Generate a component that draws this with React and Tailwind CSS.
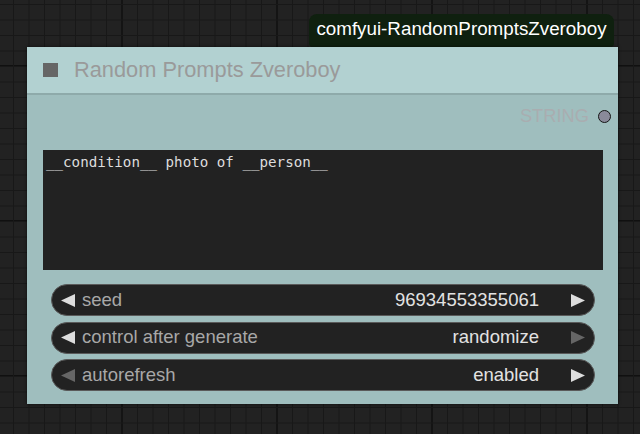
import React from 'react';

const sans = "font-['Liberation_Sans',Arial,sans-serif]";

const Arrow = ({ dir, on }) => (
  <svg width="15" height="13" viewBox="0 0 15 13" className="shrink-0">
    <polygon
      points={dir === 'left' ? '0,6.5 14,0 14,13' : '1,0 15,6.5 1,13'}
      fill={on ? '#dddddd' : '#666666'}
    />
  </svg>
);

const Widget = ({ label, value, left = true, right = true }) => (
  <div className="flex items-center h-[32px] rounded-full bg-[#222222] border border-[#5a5a5a] pl-[9px] pr-[9px]">
    <Arrow dir="left" on={left} />
    <span className="ml-[6px] text-[#a8a8a8] text-[18.5px] leading-none">{label}</span>
    <span className="ml-auto text-[#e2e2e2] text-[18.5px] leading-none">{value}</span>
    <span className="ml-[31px]">
      <Arrow dir="right" on={right} />
    </span>
  </div>
);

const App = () => {
  return (
    <div
      className={`relative w-[640px] h-[434px] overflow-hidden bg-[#222222] ${sans} [background-image:linear-gradient(to_right,#181818_1px,transparent_1px),linear-gradient(to_bottom,#181818_1px,transparent_1px),linear-gradient(to_right,#101010_2px,transparent_2px),linear-gradient(to_bottom,#101010_2px,transparent_2px)] [background-size:15.5px_15.5px,15.5px_15.5px,155px_155px,155px_155px] [background-position:13px_4px,13px_4px,121px_65px,121px_65px]`}
    >
      {/* group badge */}
      <div className="absolute left-[309px] top-[14px] w-[305px] h-[33px] rounded-t-[8px] rounded-b-[4px] bg-[#0f200f] flex items-center justify-center">
        <span className="text-white text-[18.8px] leading-none pb-[2px]">comfyui-RandomPromptsZveroboy</span>
      </div>

      {/* node */}
      <div className="absolute left-[27px] top-[47px] w-[591px] h-[357px] bg-[#9fbebe] shadow-[0_0_3px_rgba(0,0,0,0.6)] flex flex-col">
        <div className="h-[48px] bg-[#b2d1d1] flex items-center border-b-2 border-[#8eaaaa]">
          <div className="ml-[16px] w-[15px] h-[14px] bg-[#666666]" />
          <span className="ml-[16px] text-[#9a9a9a] text-[21.8px] leading-none">Random Prompts Zveroboy</span>
        </div>

        <div className="flex items-center justify-end h-[40px] pr-[7px] pt-[2px]">
          <span className="text-[#a9adb0] text-[18.3px] leading-none">STRING</span>
          <span className="ml-[9px] w-[13px] h-[13px] rounded-full bg-[#8a8a9a] border-[1.5px] border-[#151515]" />
        </div>

        <div className="mt-[15px] ml-[16px] mr-[15px] h-[120px] bg-[#222222] px-[3px] pt-[3px]">
          <p className="font-['DejaVu_Sans_Mono',monospace] text-[14.2px] leading-[18px] text-[#dddddd]">__condition__ photo of __person__</p>
        </div>

        <div className="mt-[14px] ml-[24px] mr-[23px] flex flex-col gap-[5.5px]">
          <Widget label="seed" value="96934553355061" />
          <Widget label="control after generate" value="randomize" right={false} />
          <Widget label="autorefresh" value="enabled" left={false} />
        </div>
      </div>
    </div>
  );
};

export default App;
